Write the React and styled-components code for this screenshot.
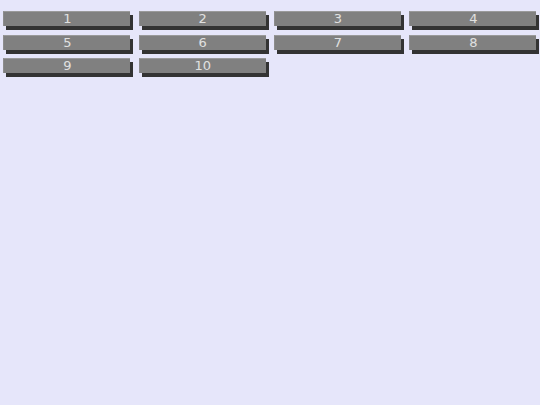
import React from 'react';
import styled, { createGlobalStyle } from 'styled-components';

const GlobalStyle = createGlobalStyle`
  html, body {
    margin: 0;
    padding: 0;
    background: #e6e6fa;
    font-family: "DejaVu Sans", Verdana, sans-serif;
  }
`;

const Grid = styled.div`
  display: grid;
  grid-template-columns: repeat(4, 127px);
  grid-auto-rows: 15px;
  align-content: start;
  column-gap: 8.33px;
  row-gap: 8.5px;
  min-height: 100vh;
  box-sizing: border-box;
  padding: 11px 0 10px 3.33px;
`;

const Tile = styled.div`
  height: 15px;
  box-sizing: border-box;
  background: #808080;
  border-top: 1px solid #9a9a9a;
  border-left: 1px solid #8c8c8c;
  box-shadow: 3px 4px 0 #333333;
  color: #e0e0e0;
  font-size: 13px;
  line-height: 14px;
  text-align: center;
`;

const items = Array.from({ length: 10 }, (_, i) => i + 1);

const App = () => (
  <>
    <GlobalStyle />
    <Grid>
      {items.map((n) => (
        <Tile key={n}>{n}</Tile>
      ))}
    </Grid>
  </>
);

export default App;
